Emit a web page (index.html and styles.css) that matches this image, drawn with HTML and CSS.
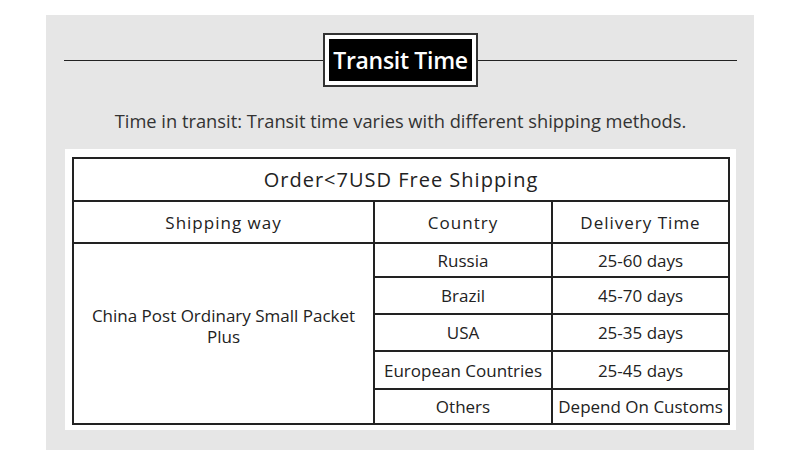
FILE: index.html
```html
<!DOCTYPE html>
<html>
<head>
<meta charset="utf-8">
<link rel="stylesheet" href="styles.css">
</head>
<body>
<div class="panel">
  <div class="title-row">
    <div class="rule"></div>
    <div class="title-box"><div class="title">Transit Time</div></div>
    <div class="rule"></div>
  </div>
  <p class="subtitle">Time in transit: Transit time varies with different shipping methods.</p>
  <div class="card">
    <table class="ship">
      <colgroup><col class="c1"><col class="c2"><col class="c3"></colgroup>
      <tr class="r-head"><td colspan="3" class="big">Order&lt;7USD Free Shipping</td></tr>
      <tr class="r-cols"><td class="sp">Shipping way</td><td class="sp">Country</td><td class="sp">Delivery Time</td></tr>
      <tr class="r1"><td rowspan="5" class="way"><div class="way-line">China Post Ordinary Small Packet</div><div class="way-line">Plus</div></td><td>Russia</td><td>25-60 days</td></tr>
      <tr class="r2"><td>Brazil</td><td>45-70 days</td></tr>
      <tr class="r3"><td>USA</td><td>25-35 days</td></tr>
      <tr class="r4"><td>European Countries</td><td>25-45 days</td></tr>
      <tr class="r5"><td>Others</td><td>Depend On Customs</td></tr>
    </table>
  </div>
</div>
</body>
</html>
```

FILE: styles.css
```css
html, body {
  margin: 0;
  padding: 0;
  background: #ffffff;
}
body {
  font-family: "Open Sans", "Noto Sans", sans-serif;
  color: #222;
}
.panel {
  margin: 15px 0 0 46px;
  width: 708px;
  height: 435px;
  background: #e6e6e6;
  box-sizing: border-box;
  padding: 18px 17px 0 18px;
}
.title-row {
  display: flex;
  align-items: center;
  height: 54px;
}
.rule {
  flex: 1;
  height: 1px;
  background: #222;
}
.title-box {
  border: 2px solid #333;
  padding: 4px;
  background: #fff;
}
.title {
  background: #000;
  color: #fff;
  font-size: 23px;
  font-weight: 600;
  line-height: 42px;
  padding: 0 4px;
  letter-spacing: -0.3px;
}
.subtitle {
  margin: 22px 0 0 0;
  text-align: center;
  font-size: 18.3px;
  line-height: 24px;
  color: #333;
}
.card {
  margin: 16px 0 0 1px;
  width: 671px;
  height: 281px;
  background: #fff;
  box-sizing: border-box;
  padding: 8px 8px 7px 7px;
}
.ship {
  width: 656px;
  border-collapse: collapse;
  border: 2px solid #111;
  table-layout: fixed;
}
.c1 { width: 301px; }
.c2 { width: 178px; }
.c3 { width: 177px; }
.ship td {
  border: 2px solid #222;
  text-align: center;
  vertical-align: middle;
  font-size: 17px;
  padding: 0;
  color: #222;
}
.ship td.big {
  font-size: 20px;
  letter-spacing: 1px;
}
.ship td.sp {
  font-size: 17px;
  letter-spacing: 1px;
}
.ship td.way {
  padding-bottom: 16px;
}
.way-line {
  line-height: 21px;
}
.r-head { height: 43px; }
.r-cols { height: 42px; }
.r1 { height: 34px; }
.r2 { height: 37px; }
.r3 { height: 37px; }
.r4 { height: 38px; }
.r5 { height: 35px; }
```
